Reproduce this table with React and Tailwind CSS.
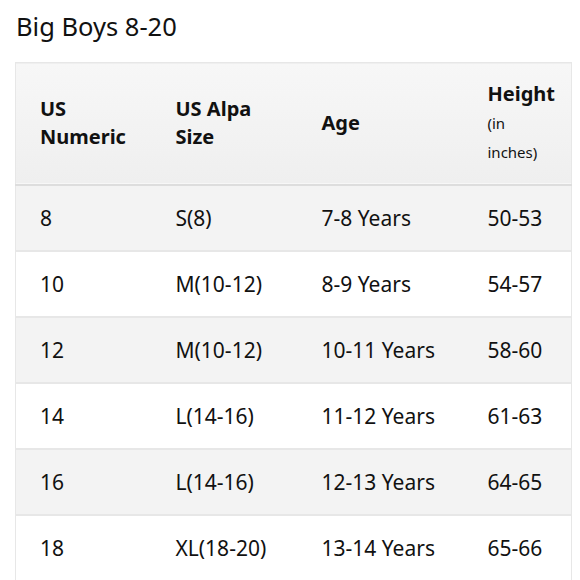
const rows = [
  ["8", "S(8)", "7-8 Years", "50-53"],
  ["10", "M(10-12)", "8-9 Years", "54-57"],
  ["12", "M(10-12)", "10-11 Years", "58-60"],
  ["14", "L(14-16)", "11-12 Years", "61-63"],
  ["16", "L(14-16)", "12-13 Years", "64-65"],
  ["18", "XL(18-20)", "13-14 Years", "65-66"],
]

function App() {
  return (
    <div className="w-[580px] h-[580px] overflow-hidden bg-white text-[#111] font-['Noto_Sans',sans-serif]">
      <h1 className="pl-4 pt-[8px] h-[62px] text-[25.5px] leading-[36px]">Big Boys 8-20</h1>

      <table className="ml-[15px] w-[556px] border-collapse table-fixed">
        <colgroup>
          <col className="w-[136px]" />
          <col className="w-[146px]" />
          <col className="w-[166px]" />
          <col className="w-[108px]" />
        </colgroup>
        <thead>
          <tr className="h-[122px] bg-gradient-to-b from-[#f7f7f7] to-[#efefef] border-x border-t border-[#e7e7e7] border-b-2 border-b-[#dddddd]">
            <th className="pl-6 text-left align-middle font-bold text-[20px] leading-[28px]">
              US<br />Numeric
            </th>
            <th className="pl-6 text-left align-middle font-bold text-[20px] leading-[28px]">
              US Alpa<br />Size
            </th>
            <th className="pl-6 text-left align-middle font-bold text-[20px] leading-[28px]">
              Age
            </th>
            <th className="pl-6 text-left align-middle font-bold text-[20px] leading-[28px]">
              Height
              <div className="font-normal text-[15px] leading-[30px]">(in</div>
              <div className="font-normal text-[15px] leading-[28px]">inches)</div>
            </th>
          </tr>
        </thead>
        <tbody>
          {rows.map((r, i) => (
            <tr
              key={i}
              className={
                "h-[66px] border-x border-[#e7e7e7] border-b-2 border-b-[#e7e7e7] " +
                (i % 2 === 0 ? "bg-[#f3f3f3]" : "bg-white")
              }
            >
              {r.map((c, j) => (
                <td key={j} className="pl-6 align-middle text-[21px] leading-[28px]">
                  {c}
                </td>
              ))}
            </tr>
          ))}
        </tbody>
      </table>
    </div>
  )
}

export default App
